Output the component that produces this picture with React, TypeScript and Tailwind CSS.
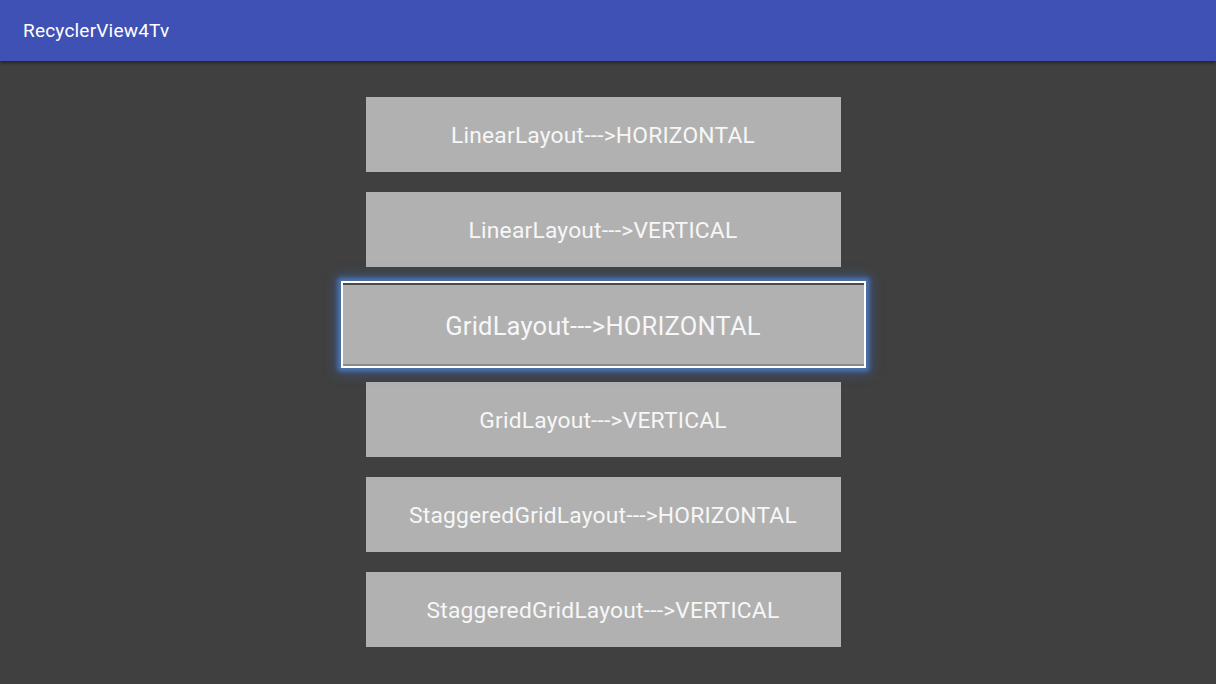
const items = [
  "LinearLayout--->HORIZONTAL",
  "LinearLayout--->VERTICAL",
  "GridLayout--->HORIZONTAL",
  "GridLayout--->VERTICAL",
  "StaggeredGridLayout--->HORIZONTAL",
  "StaggeredGridLayout--->VERTICAL",
];

const focused = 2;

export default function App() {
  return (
    <div className="w-[1216px] h-[684px] overflow-hidden bg-[#404040] font-['Roboto','Liberation_Sans',sans-serif]">
      <header className="relative z-10 h-[61px] bg-[#3f51b5] flex items-center px-[23px] pt-[2px] shadow-[0_2px_3px_rgba(0,0,0,0.45)]">
        <span className="text-[19px] text-white tracking-[0.2px]">RecyclerView4Tv</span>
      </header>

      <div className="flex flex-col items-center gap-5 pt-9 pr-[10px]">
        {items.map((label, i) =>
          i === focused ? (
            <div key={label} className="relative w-[475px] h-[75px]">
              <div className="absolute -left-[25px] -right-[25px] -top-[6px] -bottom-[6px] border-2 border-white bg-[#b1b1b1] pt-[3px] shadow-[0_0_4px_3px_#4d74b0,0_0_10px_5px_rgba(60,100,170,0.6)] flex items-center justify-center">
                <div className="absolute inset-x-0 top-0 h-[2px] bg-[#4a4a4a]" />
                <div className="absolute inset-x-0 bottom-0 h-[2px] bg-[#8a8a8a]" />
                <span className="text-[25.5px] text-[#f7f7f7] tracking-[0.2px]">{label}</span>
              </div>
            </div>
          ) : (
            <div
              key={label}
              className="w-[475px] h-[75px] bg-[#b1b1b1] pt-[3px] flex items-center justify-center"
            >
              <span className="text-[22.8px] text-[#f7f7f7] tracking-[0.2px]">{label}</span>
            </div>
          )
        )}
      </div>
    </div>
  );
}
